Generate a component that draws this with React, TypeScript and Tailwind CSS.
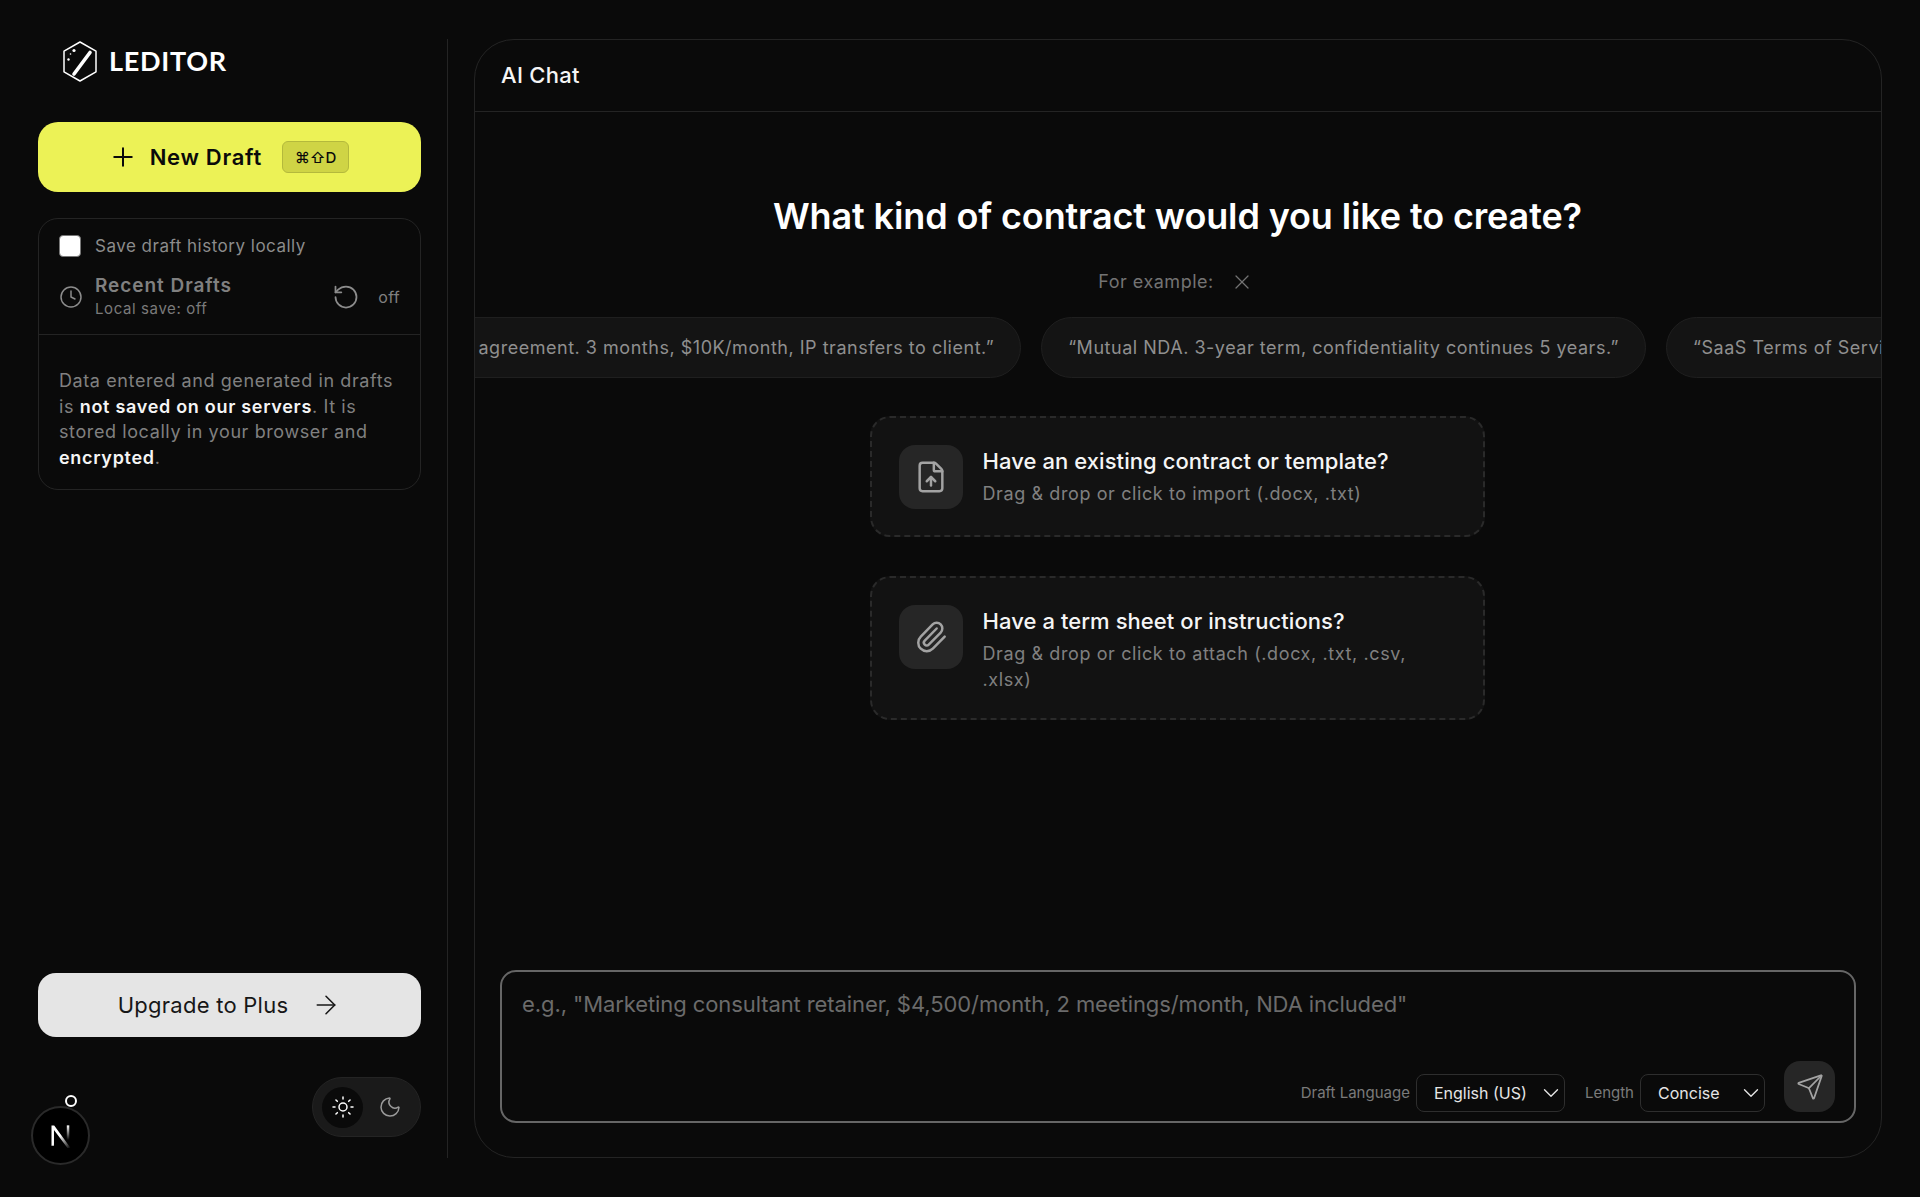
import { useState } from 'react';
import { ArrowRight, ChevronDown, Clock, FileUp, Moon, Paperclip, Plus, RotateCcw, Send, Sun, X } from 'lucide-react';

const examples = [
  '“Consulting agreement. 3 months, $10K/month, IP transfers to client.”',
  '“Mutual NDA. 3-year term, confidentiality continues 5 years.”',
  '“SaaS Terms of Service for a B2B analytics platform.”',
];

const Logo = () => (
  <svg width="34" height="42" viewBox="0 0 34 42" fill="none" className="shrink-0">
    <path d="M17 1 33 10.2v20.6L17 40 1 30.8V10.2z" stroke="white" strokeWidth="1.5" strokeLinejoin="round" />
    <path d="M27 11.5 11 33" stroke="white" strokeWidth="3.6" strokeLinecap="round" />
    <circle cx="11" cy="9.5" r="1.6" fill="white" />
    <circle cx="7.5" cy="13" r="0.8" fill="white" />
    <circle cx="5.5" cy="18.5" r="1.2" fill="white" />
  </svg>
);

// small pill select, static in the screenshot
const SelectBox = ({ value, className }: { value: string; className: string }) => (
  <button
    type="button"
    className={`flex h-[38px] items-center justify-between rounded-lg border border-[#2e2e2e] bg-[#0a0a0a] pl-[17px] pr-0 text-[16px] text-[#e5e5e5] ${className}`}
  >
    {value}
    <ChevronDown className="h-[26px] w-[26px]" strokeWidth={1.25} />
  </button>
);

const DropCard = ({
  icon,
  title,
  children,
}: {
  icon: React.ReactNode;
  title: string;
  children: React.ReactNode;
}) => (
  <div className="flex w-[615px] items-start gap-5 rounded-[20px] border-2 border-dashed border-[#2a2a2a] bg-[#121212] pb-[25px] pl-[27px] pr-[27px] pt-[27px]">
    <div className="mb-[1px] flex h-16 w-16 shrink-0 items-center justify-center rounded-2xl bg-[#262626] text-[#a3a3a3]">
      {icon}
    </div>
    <div className="min-w-0">
      <p className="text-[22px] font-medium leading-[32px] tracking-[0.07px] text-[#f5f5f5]">{title}</p>
      <p className="mt-[4px] text-[18px] leading-[26px] tracking-[0.6px] text-[#808080]">{children}</p>
    </div>
  </div>
);

const Sidebar = () => (
  <aside className="flex w-[448px] shrink-0 flex-col border-r border-[#242424] pb-[21px] pl-[38px] pr-[26px]">
    <div className="flex h-[45px] items-center gap-[12px] pl-[25px]">
      <Logo />
      <span className="-mt-[2px] font-['Lato'] text-[27px] font-bold leading-none tracking-[0.7px] text-white">LEDITOR</span>
    </div>

    <button
      type="button"
      className="mt-[38px] flex h-[70px] w-full items-center justify-center gap-3 rounded-[20px] bg-[#ecf256] pr-[2px] text-[22px] font-semibold text-[#0a0a0a]"
    >
      <Plus className="h-[30px] w-[30px]" strokeWidth={1.6} />
      <span className="tracking-[0.7px]">New Draft</span>
      <kbd className="ml-2 flex h-[32px] items-center rounded-md border border-[#b4b93c] bg-[#cfd445] px-[12px] font-['Inter'] text-[15px] font-medium leading-none">
        ⌘⇧D
      </kbd>
    </button>

    <div className="mt-[26px] rounded-[20px] border border-[#242424]">
      <div className="border-b border-[#242424] pb-[14px] pl-5 pr-5 pt-[16px]">
        <label className="flex items-center gap-[14px]">
          <span className="h-[22px] w-[22px] rounded-[4px] border border-[#777] bg-white" />
          <span className="text-[17px] leading-[22px] tracking-[0.5px] text-[#8c8c8c]">Save draft history locally</span>
        </label>
        <div className="mt-[16px] flex items-center">
          <Clock className="h-6 w-6 text-[#8c8c8c]" strokeWidth={1.5} />
          <div className="ml-3 flex-1">
            <p className="text-[19px] font-semibold leading-[25px] tracking-[0.95px] text-[#808080]">Recent Drafts</p>
            <p className="text-[15px] leading-[22px] tracking-[0.6px] text-[#7a7a7a]">Local save: off</p>
          </div>
          <RotateCcw className="h-7 w-7 text-[#8c8c8c]" strokeWidth={1.5} />
          <span className="ml-[18px] text-[16px] tracking-[0.3px] text-[#808080]">off</span>
        </div>
      </div>
      <p className="px-5 pb-[19px] pt-[33px] text-[18px] leading-[25.6px] tracking-[0.6px] text-[#808080]">
        Data entered and generated in drafts is <strong className="font-semibold tracking-[0.7px] text-[#f5f5f5]">not saved on our servers</strong>. It is stored locally in your browser and <strong className="font-semibold tracking-[0.7px] text-[#f5f5f5]">encrypted</strong>.
      </p>
    </div>

    <button
      type="button"
      className="mt-auto flex h-16 w-full items-center justify-center gap-[23px] rounded-[18px] bg-[#e5e5e5] text-[22px] tracking-[0.25px] text-[#171717]"
    >
      Upgrade to Plus
      <ArrowRight className="h-[30px] w-[30px]" strokeWidth={1.25} />
    </button>

    <div className="mt-[40px] flex justify-end">
      <div className="flex h-[60px] w-[109px] items-center gap-[6px] rounded-full border border-[#242424] bg-[#1a1a1a] px-[9px]">
        <span className="flex h-[41px] w-[41px] items-center justify-center rounded-full bg-[#0a0a0a] text-white">
          <Sun className="h-6 w-6" strokeWidth={1.5} />
        </span>
        <span className="flex h-[41px] w-[41px] items-center justify-center text-[#9a9a9a]">
          <Moon className="h-6 w-6" strokeWidth={1.5} />
        </span>
      </div>
    </div>
  </aside>
);

const ChatPanel = () => {
  const [prompt, setPrompt] = useState('');

  return (
    <main className="ml-[26px] flex w-[1408px] flex-col overflow-hidden rounded-[40px] border border-[#242424]">
      <header className="flex h-[72px] shrink-0 items-center border-b border-[#242424] pl-[26px]">
        <h2 className="text-[22px] font-medium tracking-[0.3px] text-[#f5f5f5]">AI Chat</h2>
      </header>

      <section className="flex flex-1 flex-col items-center pt-[79px]">
        <h1 className="mr-[1px] text-[36px] font-semibold leading-[50px] tracking-[-0.13px] text-white">
          What kind of contract would you like to create?
        </h1>
        <div className="mt-[27px] flex items-center gap-4 pr-[4px] text-[18px] leading-[28px] tracking-[0.5px] text-[#737373]">
          For example:
          <X className="h-6 w-6" strokeWidth={1.25} />
        </div>

        <div className="mt-[21px] w-full overflow-hidden">
          <div className="-ml-[134px] flex gap-5">
            {examples.map(text => (
              <span
                key={text}
                className="flex h-[61px] shrink-0 items-center whitespace-nowrap rounded-full border border-[#1f1f1f] bg-[#141414] px-[26px] text-[18px] tracking-[0.52px] text-[#8f8f8f]"
              >
                {text}
              </span>
            ))}
          </div>
        </div>

        <div className="mr-[2px] mt-[38px] flex flex-col gap-[39px]">
          <DropCard icon={<FileUp className="h-[34px] w-[34px]" strokeWidth={1.75} />} title="Have an existing contract or template?">
            Drag &amp; drop or click to import (.docx, .txt)
          </DropCard>
          <DropCard icon={<Paperclip className="h-[34px] w-[34px]" strokeWidth={1.75} />} title="Have a term sheet or instructions?">
            Drag &amp; drop or click to attach (.docx, .txt, .csv, .xlsx)
          </DropCard>
        </div>
      </section>

      <div className="mx-[25px] mb-[34px] flex h-[153px] shrink-0 flex-col rounded-[16px] border-2 border-[#666] pb-[9px] pl-[20px] pr-[19px] pt-[16px]">
        <textarea
          value={prompt}
          onChange={e => setPrompt(e.target.value)}
          rows={1}
          placeholder='e.g., "Marketing consultant retainer, $4,500/month, 2 meetings/month, NDA included"'
          className="h-[32px] w-full resize-none bg-transparent text-[22px] leading-[32px] tracking-[-0.09px] text-white outline-none placeholder:text-[#6b6b6b]"
        />
        <div className="mt-auto flex items-end justify-end">
          <div className="flex h-[38px] items-center text-[15px] text-[#7a7a7a]">
            <span className="mr-[6px]">Draft Language</span>
            <SelectBox value="English (US)" className="w-[149px]" />
            <span className="ml-[20px] mr-[6px]">Length</span>
            <SelectBox value="Concise" className="w-[125px]" />
          </div>
          <button
            type="button"
            className="ml-[19px] flex h-[51px] w-[51px] items-center justify-center rounded-2xl bg-[#262626] text-[#a3a3a3]"
          >
            <Send className="h-7 w-7" strokeWidth={1.5} />
          </button>
        </div>
      </div>
    </main>
  );
};

// dev-mode badge that sits over the sidebar corner
const DevBadge = () => (
  <div className="absolute bottom-[32px] left-[31px] flex h-[59px] w-[59px] items-center justify-center rounded-full border-2 border-[#2a2a2a] bg-black">
    <svg width="27" height="27" viewBox="0 0 24 24" fill="none">
      <defs>
        <linearGradient id="nFade" x1="0" y1="0" x2="1" y2="1">
          <stop offset="0.45" stopColor="white" />
          <stop offset="1" stopColor="white" stopOpacity="0" />
        </linearGradient>
        <linearGradient id="nBar" x1="0" y1="0" x2="0" y2="1">
          <stop offset="0" stopColor="white" />
          <stop offset="1" stopColor="white" stopOpacity="0" />
        </linearGradient>
      </defs>
      <path d="M4 21V3h2.4L21 23h-2.8L6.2 7v14z" fill="url(#nFade)" />
      <rect x="17.6" y="3" width="2.2" height="13" fill="url(#nBar)" />
    </svg>
    <span className="absolute -top-[13px] left-[32px] h-[12px] w-[12px] rounded-full border-2 border-white bg-transparent" />
  </div>
);

export default function App() {
  return (
    <div className="relative flex h-[1197px] w-full bg-[#0a0a0a] py-[39px] font-['Inter',sans-serif]">
      <Sidebar />
      <ChatPanel />
      <DevBadge />
    </div>
  );
}
